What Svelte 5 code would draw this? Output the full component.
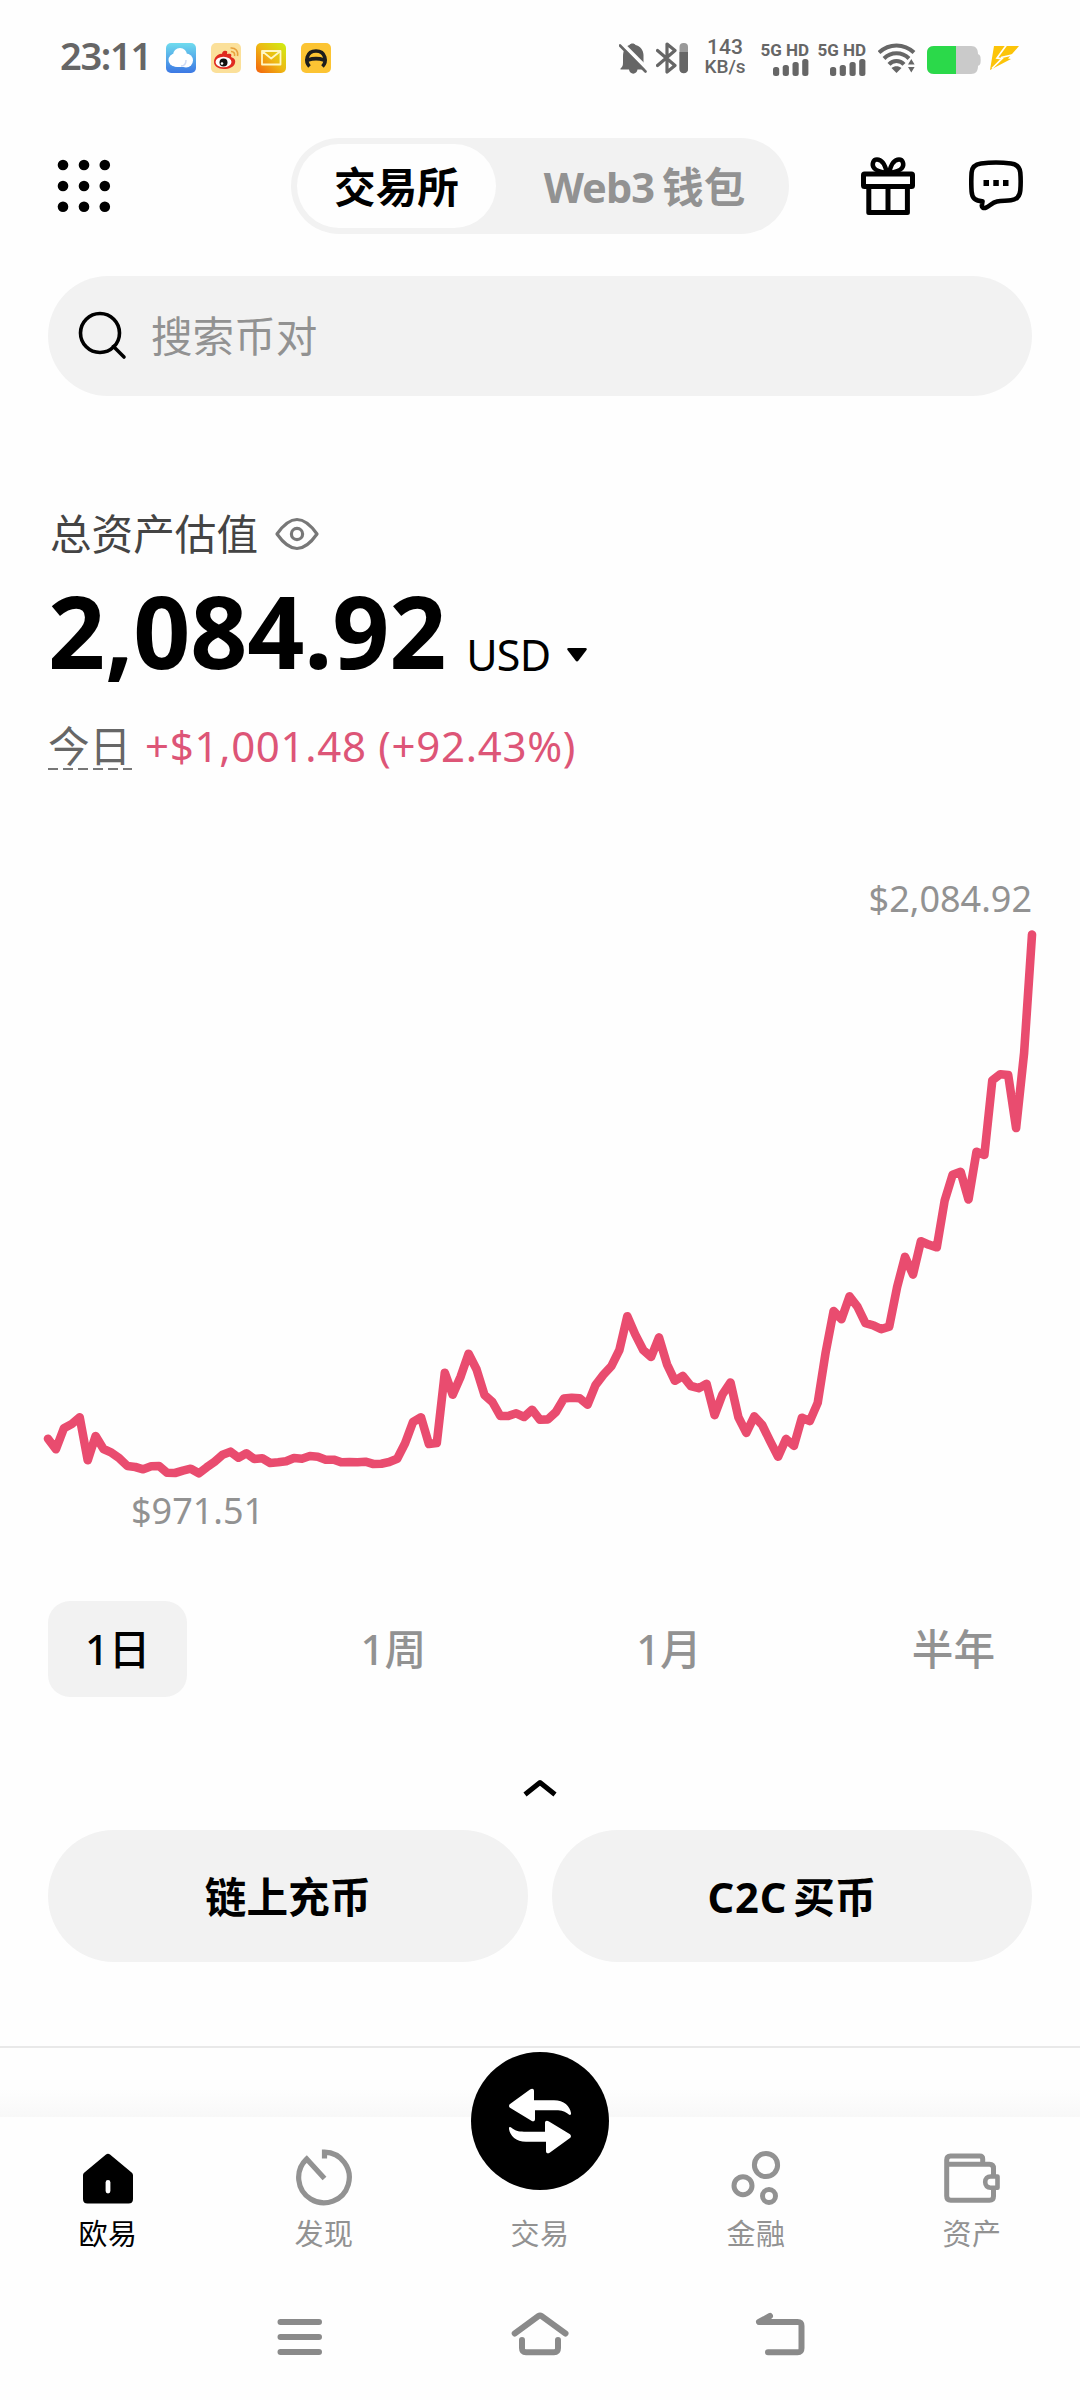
<script>
  // Portfolio value samples, as vertical offsets inside the plot area.
  const samples = [
    538.7, 549.3, 528.3, 524, 517.3, 560.3, 536, 549, 552.7, 558.3, 566, 567, 569.3, 566.3, 566, 572.7, 573, 570.7,
    568.7, 573.3, 567.3, 561.7, 554.7, 551.7, 557.7, 553.3, 559, 558.3, 563, 562.3, 561.3, 558, 558.7, 556, 556.7,
    559.7, 559.7, 562.3, 562, 562.3, 561.7, 564, 563.7, 562, 558.7, 543.3, 522, 517.3, 544, 543, 472.7, 494.7,
    476.7, 453.7, 469.3, 495, 502, 516, 516, 513.3, 517, 509.7, 519.8, 519.4, 512, 498.6, 497.7, 498.2, 504.7,
    485.2, 474.7, 466.1, 450, 416.2, 434.4, 450, 457, 437.4, 464.3, 480.8, 476, 486, 488.2, 483.9, 515.1, 494.3,
    482.5, 517.2, 532.9, 516.4, 525, 541.1, 556.7, 538.9, 545.9, 517.7, 521.1, 502.9, 452.2, 411, 419.2, 396.3,
    406.7, 423.1, 425.3, 429.2, 426.6, 387.1, 356.8, 374.6, 341.2, 344.7, 347.3, 300.4, 274.8, 271.8, 299.5,
    251.8, 254.9, 180.3, 174.2, 175.1, 228, 153, 34.6
  ];
  const step = 984 / (samples.length - 1);
  const points = samples.map((y, i) => `${(i * step).toFixed(1)},${y}`).join(' ');

  const ranges = ['1日', '1周', '1月', '半年'];
  let range = $state('1日');
</script>

<div class="screen">
  <div class="status">
    <span class="time">23:11</span>
    <div class="apps">
      <svg width="30" height="30" viewBox="0 0 30 30">
        <defs><linearGradient id="sky" x1="0" y1="0" x2="0" y2="1"><stop offset="0" stop-color="#6fdcee" /><stop offset="1" stop-color="#3c78e4" /></linearGradient></defs>
        <rect width="30" height="30" rx="5" fill="url(#sky)" />
        <g fill="#fff"><circle cx="14" cy="12" r="7" /><circle cx="9" cy="17" r="6.5" /><circle cx="20" cy="17.500" r="7" /><rect x="7" y="15" width="15" height="9" rx="4" /></g>
        <path d="M15 23c3 0 5-2 5-6" fill="none" stroke="#cfdcf5" stroke-width="1.500" />
      </svg>
      <svg width="30" height="30" viewBox="0 0 30 30">
        <rect width="30" height="30" rx="5" fill="#fbe09a" />
        <path d="M3 19c0-5 5-9 8-8 0-2 2-4 4-3 2 0 1 2 1 3 4-1 5 0 4 3 3 1 5 3 4 6-1 4-6 6-11 6-6 0-10-3-10-7z" fill="#e02a20" />
        <ellipse cx="12.500" cy="19" rx="8" ry="5.200" fill="#fff" />
        <circle cx="12.500" cy="19.500" r="4" fill="#111" /><circle cx="11" cy="20.500" r="1.300" fill="#fff" />
        <path d="M20 8.500c3 0 4 2 3.500 4.500M19.500 5c5-.5 8 3 7 8" fill="none" stroke="#e8a13c" stroke-width="1.600" />
      </svg>
      <svg width="30" height="30" viewBox="0 0 30 30">
        <defs><linearGradient id="mail" x1="1" y1="0" x2="0" y2="1"><stop offset="0" stop-color="#cdf013" /><stop offset=".5" stop-color="#eeb813" /><stop offset="1" stop-color="#f4600d" /></linearGradient></defs>
        <rect width="30" height="30" rx="5" fill="url(#mail)" />
        <path d="M6 8h18.500v13.500H6zM6.500 8.500l8.700 7 8.700-7" fill="none" stroke="#fff7c4" stroke-width="1.800" stroke-linejoin="round" />
      </svg>
      <svg width="30" height="30" viewBox="0 0 30 30">
        <rect width="30" height="30" rx="5" fill="#fcc433" />
        <path d="M8.500 23.500C4 19 5 8 15 8s11 11 6.500 15.500M7 17c5-1.700 11-1.700 16 0" fill="none" stroke="#1d1d1d" stroke-width="3.600" />
      </svg>
    </div>
    <div class="signals">
      <svg class="bell" width="28" height="31" viewBox="0 0 28 31">
        <path d="M1.500 25.500c2-2 2.500-3 2.500-6v-6C4 7 7 3 10.500 2c1-2 5-2 6 0C21 3 24.500 7 24.500 12v7.500c0 3 .5 4 2 6v1H18.500c-.5 5.500-8 5.500-8.500 0H1.500z" fill="#666" />
        <path d="M2.500 0l27 27" stroke="#fefefe" stroke-width="4" /><path d="M1 2.500L26.500 28.500" stroke="#666" stroke-width="2.600" stroke-linecap="round" />
      </svg>
      <svg class="bt" width="33" height="32" viewBox="0 0 33 32">
        <path d="M1.500 8.500L19 23.500 11 30V2l8 6.500L1.500 23.500" fill="none" stroke="#666" stroke-width="3.200" stroke-linejoin="round" stroke-linecap="round" />
        <rect x="23.500" y="1" width="8.500" height="30" rx="4" fill="#999" /><path d="M23.500 10H32v17a4 4 0 0 1-8.500 0z" fill="#666" />
      </svg>
      <div class="speed"><span>143</span><span>KB/s</span></div>
      {#each [0, 1] as sim (sim)}
        <div class="sim">
          <span>5G HD</span>
          <svg width="36" height="17" viewBox="0 0 36 17" fill="#666">
            <rect x="0" y="8" width="6.200" height="9" rx="2.500" /><rect x="9.700" y="6" width="6.200" height="11" rx="2.500" /><rect x="19.500" y="3" width="6.200" height="14" rx="2.500" /><rect x="29.200" y="0" width="6.200" height="17" rx="2.500" />
          </svg>
        </div>
      {/each}
      <svg class="wifi" width="38" height="30" viewBox="0 0 38 30">
        <g fill="none" stroke="#666" stroke-width="4"><path d="M1 9.500C11 0 26 0 36 9.500" /><path d="M6 15.500c7-7 18-7 25 0" /><path d="M11 21.300c4-4.500 11-4.500 15 0" /></g>
        <path d="M13.500 25c3-2.500 7-2.500 10 0l-5 5z" fill="#666" />
        <path d="M28 22.500l5-8.500 5 8.500v7h-10z" fill="#fefefe" />
        <path d="M30 21.500l3.300-5.500 3.300 5.500zM30 24h6.600l-3.300 5.500z" fill="#666" />
      </svg>
      <svg class="cell" width="54" height="28" viewBox="0 0 54 28">
        <path d="M7 0h37c5 0 7 3 7 8 2 1 2.700 2 2.700 6S53 19 51 20c0 5-2 8-7 8H7c-5 0-7-3-7-7V7c0-4 2-7 7-7z" fill="#cacaca" />
        <path d="M29 0H7C2 0 0 3 0 7v14c0 4 2 7 7 7h22z" fill="#2bd94a" />
      </svg>
      <svg class="bolt" width="30" height="26" viewBox="0 0 30 26">
        <path d="M4 1h25L18 13.500l3 .5L0 25z" fill="#fcc409" /><path d="M16.500 0L7 13l5 .7L2 23.500M24 9.500L11 12.500" stroke="#fefefe" stroke-width="1.700" fill="none" />
      </svg>
    </div>
  </div>

  <header>
    <svg class="dots" width="54" height="54" viewBox="0 0 54 54">
      {#each [6, 27, 47.8] as cy (cy)}
        {#each [6, 27, 47.8] as cx (cx)}
          <circle {cx} {cy} r="5.300" />
        {/each}
      {/each}
    </svg>
    <div class="switch">
      <span class="on">交易所</span>
      <span class="off">Web3<i>钱包</i></span>
    </div>
    <svg class="gift" width="54" height="60" viewBox="0 0 54 60" fill="none" stroke="#000" stroke-width="5">
      <rect x="2.500" y="18" width="49" height="12.500" rx="1" />
      <path d="M7.800 31v25.500h38.600V31M27 31v25" stroke-linejoin="round" />
      <path d="M26 17C24 8 20 3.500 16 3.500c-4 0-5.500 5-3 8.500 2 3 7 4 13 5zM28 17c2-9 6-13.500 10-13.500 4 0 5.500 5 3 8.500-2 3-7 4-13 5z" stroke-width="4.500" />
    </svg>
    <svg class="chat" width="54" height="52" viewBox="0 0 54 52">
      <path d="M12 3.500c9-1.200 21-1.200 30 0 6 .8 8.800 3.500 9.300 9 .5 6 .5 12 0 18-.5 6-3.500 9-9.300 9.800-5 .7-9 .2-14 1.200-5 1-7 4.500-11 6.200-2.500 1-4.800-.5-4-3l.5-3.500C6 41 3 38 2.600 31.500c-.4-6-.4-13 0-19C3 7 6 4.300 12 3.500z" fill="none" stroke="#000" stroke-width="4.600" stroke-linejoin="round" />
      <path d="M14.500 20h5.500v6h-5.500zM24.300 20h5.500v6h-5.500zM34 20h5.500v6H34z" />
    </svg>
  </header>

  <div class="search">
    <svg width="50" height="50" viewBox="0 0 50 50" fill="none" stroke="#000" stroke-width="3.600"><circle cx="22" cy="22" r="19.500" /><path d="M35.500 35.500l10.500 10.500" stroke-linecap="round" /></svg>
    <span>搜索币对</span>
  </div>

  <section class="assets">
    <div class="label">
      <span>总资产估值</span>
      <svg width="44" height="34" viewBox="0 0 44 34" fill="none" stroke="#777" stroke-width="3.200" stroke-linejoin="round"><path d="M2 17C9 7 15 2.500 22 2.500S35 7 42 17C35 27 29 31.500 22 31.500S9 27 2 17z" /><circle cx="22" cy="17" r="5.600" /></svg>
    </div>
    <div class="total">
      <span class="num">2,084.92</span>
      <span class="cur">USD</span>
      <svg width="22" height="16" viewBox="0 0 22 16"><path d="M2.500 1h17c1.300 0 1.700 1 1 2l-8 10.500c-1 1.200-2 1.200-3 0L1.500 3c-.7-1-.3-2 1-2z" /></svg>
    </div>
    <div class="today">
      <span class="day">今日</span>
      <span class="gain">+$1,001.48 (+92.43%)</span>
    </div>
  </section>

  <section class="chart">
    <div class="max">$2,084.92</div>
    <svg width="984" height="560" viewBox="0 20 984 560">
      <polyline {points} fill="none" stroke="#e94c6f" stroke-width="8.600" stroke-linejoin="round" stroke-linecap="round" />
    </svg>
    <div class="min">$971.51</div>
  </section>

  <div class="ranges">
    {#each ranges as r (r)}
      <button class:active={range === r} onclick={() => (range = r)}>{r}</button>
    {/each}
  </div>

  <svg class="fold" width="34" height="18" viewBox="0 0 34 18" fill="none" stroke="#000" stroke-width="5"><path d="M2 15.500L17 3.500l15 12" stroke-linejoin="round" /></svg>

  <div class="actions">
    <button>链上充币</button>
    <button><b>C2C</b><i>买币</i></button>
  </div>

  <div class="edge"></div>

  <nav class="tabs">
    <div class="tab current">
      <svg width="60" height="60" viewBox="0 0 60 60"><path d="M28 5.500c1.300-1 2.700-1 4 0l21 17.500c1.300 1 2 2 2 3.500V50c0 3-1.500 4.500-4.500 4.500h-41C6.500 54.500 5 53 5 50V26.500C5 25 5.700 24 7 23z" /><rect x="27.600" y="31" width="4.800" height="13.500" rx="2.400" fill="#fff" /></svg>
      <span>欧易</span>
    </div>
    <div class="tab">
      <svg width="60" height="60" viewBox="0 0 60 60" fill="none" stroke="#929292" stroke-width="5.200"><path d="M30.500 9.500V3.200A25.300 25.300 0 1 1 12.700 10L30.500 29.500" /></svg>
      <span>发现</span>
    </div>
    <div class="tab trade">
      <div class="disc">
        <svg width="66" height="58" viewBox="-33 -29 66 58" fill="#fff">
          <path id="swap" d="M-30-17L-10-31.500c2-1.500 4-1 4 1.500V-20.800H14c10 0 16 6 17 12.800.2 2-1 2.500-2.500 1.200C25-9.500 22-10.700 16-10.700H-5V-2c0 2.500-2 3-4 1.500L-30-13.200c-1.300-1-1.300-2.800 0-3.800z" />
          <use href="#swap" transform="rotate(180)" />
        </svg>
      </div>
      <span>交易</span>
    </div>
    <div class="tab">
      <svg width="60" height="60" viewBox="0 0 60 60" fill="none" stroke="#929292" stroke-width="5"><circle cx="40" cy="16" r="11.600" /><circle cx="17" cy="36.700" r="9" /><circle cx="43" cy="47" r="6.500" /></svg>
      <span>金融</span>
    </div>
    <div class="tab">
      <svg width="60" height="60" viewBox="0 0 60 60" fill="none" stroke="#929292" stroke-width="5" stroke-linejoin="round"><path d="M40.700 15V10c0-2-1-3-3-3H8.500C6 7 4.700 8.500 4.700 11v36c0 3 1.300 4.300 4 4.300h38.800c2.500 0 4-1.500 4-4V38.500M51.500 27v-7.500c0-2.800-1.500-4.200-4-4.200H5" /><path d="M55.500 27.500v11.200H48.500c-3 0-5.300-2-5.300-5.600s2.300-5.600 5.300-5.600z" stroke-width="4.600" /></svg>
      <span>资产</span>
    </div>
  </nav>

  <div class="sysnav">
    <svg width="60" height="50" viewBox="0 0 60 50"><path d="M10.500 10h38.500M10.500 25h38.500M10.500 40h38.500" /></svg>
    <svg width="60" height="50" viewBox="0 0 60 50"><path d="M4.700 21.500L28.500 4c1-.7 2-.7 3 0L55.500 21.500M12 28v8c0 3 1.300 4.200 4 4.200h28c2.700 0 4-1.200 4-4.200v-8" /></svg>
    <svg width="60" height="50" viewBox="0 0 60 50"><path d="M20 4L9 10h38.500c3 0 4 1 4 4v22c0 3-1 4.300-4 4.300H18" /></svg>
  </div>
</div>

<style>
  :global(body) {
    margin: 0;
    background: #fefefe;
  }
  .screen {
    width: 1080px;
    height: 2400px;
    overflow: hidden;
    display: flex;
    flex-direction: column;
    background: #fefefe;
    color: #000;
    font-family: 'Noto Sans', 'Noto Sans CJK SC', sans-serif;
    font-size: 41.6px;
  }
  svg {
    display: block;
    flex: none;
  }
  i {
    font-style: normal;
  }
  button {
    font: inherit;
    color: inherit;
    border: 0;
    padding: 0;
    background: none;
  }
  .status {
    height: 116px;
    box-sizing: border-box;
    padding: 0 60px;
    display: flex;
    align-items: center;
    color: #666;
  }
  .time {
    width: 106px;
    font-size: 38px;
    font-weight: 600;
    line-height: 40px;
    margin-top: -6px;
    letter-spacing: -1.3px;
  }
  .apps {
    display: flex;
    gap: 15px;
  }
  .signals {
    margin-left: auto;
    display: flex;
    align-items: center;
  }
  .bt {
    margin-left: 9px;
  }
  .speed {
    width: 44px;
    margin: -3px 0 0 14px;
    display: flex;
    flex-direction: column;
    align-items: center;
    font-family: Roboto, 'Noto Sans', sans-serif;
    font-size: 21px;
    line-height: 20px;
    font-weight: 500;
  }
  .speed span + span {
    font-size: 19px;
  }
  .sim {
    width: 48px;
    margin-left: 14px;
    display: flex;
    flex-direction: column;
    align-items: flex-end;
    font-family: Roboto, 'Noto Sans', sans-serif;
    font-size: 17px;
    font-weight: 700;
    line-height: 18px;
    white-space: nowrap;
  }
  .sim + .sim {
    margin-left: 9px;
  }
  .wifi {
    margin-left: 12px;
  }
  .cell {
    margin: 3px 0 0 11px;
  }
  .bolt {
    margin-left: 9px;
  }
  header {
    height: 140px;
    padding: 0 57px;
    display: flex;
    align-items: center;
  }
  .switch {
    width: 498px;
    height: 96px;
    box-sizing: border-box;
    padding: 6px;
    margin-left: 180px;
    border-radius: 48px;
    background: #f2f2f2;
    display: flex;
    font-weight: 700;
  }
  .switch span {
    line-height: 86px;
    text-align: center;
  }
  .switch .on {
    width: 199px;
    height: 84px;
    border-radius: 42px;
    background: #fefefe;
  }
  .switch .off {
    flex: 1;
    padding-left: 10px;
    color: #929292;
    letter-spacing: -1px;
  }
  .switch .off i {
    margin-left: 8px;
    letter-spacing: 0;
  }
  .gift {
    margin-left: 72px;
  }
  .chat {
    margin-left: 54px;
  }
  .search {
    height: 120px;
    margin: 20px 48px 0;
    box-sizing: border-box;
    padding-left: 30px;
    border-radius: 60px;
    background: #f2f2f2;
    display: flex;
    align-items: center;
    gap: 23px;
    color: #929292;
  }
  .search span,
  .label span {
    padding-bottom: 4px;
  }
  .assets {
    margin: 108px 48px 0;
  }
  .label {
    height: 60px;
    display: flex;
    align-items: center;
    gap: 17px;
    padding-left: 2px;
    color: #444;
  }
  .total {
    height: 120px;
    margin-top: 4px;
    display: flex;
    align-items: flex-start;
  }
  .num {
    font-size: 100px;
    font-weight: 700;
    line-height: 124px;
    letter-spacing: -0.2px;
  }
  .cur {
    font-size: 43px;
    line-height: 60px;
    margin: 57px 0 0 20px;
    letter-spacing: -0.8px;
  }
  .total svg {
    margin: 79px 0 0 16px;
  }
  .today {
    height: 58px;
    margin-top: 31px;
    display: flex;
    gap: 13px;
    line-height: 54px;
  }
  .day {
    width: 84px;
    height: 51px;
    color: #666;
    background: repeating-linear-gradient(90deg, #777 0 10px, transparent 10px 15px) bottom / 100% 2px no-repeat;
  }
  .gain {
    color: #dd5577;
    font-size: 42px;
    letter-spacing: 0.7px;
  }
  .chart {
    margin: 93px 48px 0;
    color: #929292;
    font-size: 36px;
  }
  .chart svg {
    overflow: visible;
  }
  .max {
    height: 50px;
    line-height: 58px;
    text-align: right;
  }
  .min {
    height: 60px;
    line-height: 62px;
    padding-left: 83px;
  }
  .ranges {
    margin: 61px 48px 0;
    display: flex;
    justify-content: space-between;
  }
  .ranges button {
    height: 96px;
    padding: 0 37px;
    border-radius: 22px;
    color: #929292;
    line-height: 96px;
    font-weight: 500;
  }
  .ranges .active {
    background: #f2f2f2;
    color: #000;
  }
  .fold {
    margin: 82px auto 0;
  }
  .actions {
    margin: 33px 48px 0;
    display: flex;
    gap: 24px;
  }
  .actions button {
    flex: 1;
    height: 132px;
    border-radius: 66px;
    background: #f2f2f2;
    font-weight: 700;
    padding-bottom: 2px;
  }
  .actions b {
    font-weight: 700;
    letter-spacing: 0.8px;
  }
  .actions i {
    margin-left: 6px;
  }
  .edge {
    height: 71px;
    margin-top: 84px;
    box-sizing: border-box;
    border-top: 2px solid #e9e9e9;
    background: linear-gradient(#fefefe 60%, #f8f8f8);
  }
  .tabs {
    height: 163px;
    display: grid;
    grid-template-columns: repeat(5, 1fr);
    background: #fefefe;
    font-size: 29px;
    color: #929292;
  }
  .tab {
    display: flex;
    flex-direction: column;
    align-items: center;
    padding-top: 32px;
    gap: 5px;
  }
  .tab span {
    line-height: 40px;
    letter-spacing: 0.5px;
  }
  .tab.current {
    color: #000;
  }
  .trade {
    padding-top: 0;
    gap: 24px;
  }
  .disc {
    width: 138px;
    height: 138px;
    margin-top: -65px;
    border-radius: 50%;
    background: #000;
    display: flex;
    align-items: center;
    justify-content: center;
  }
  .disc svg {
    overflow: visible;
  }
  .sysnav {
    height: 120px;
    display: flex;
    justify-content: center;
    gap: 180px;
    padding-top: 32px;
    box-sizing: border-box;
  }
  .sysnav svg {
    fill: none;
    stroke: #8a8a8a;
    stroke-width: 6;
    stroke-linecap: round;
    stroke-linejoin: round;
  }
</style>
